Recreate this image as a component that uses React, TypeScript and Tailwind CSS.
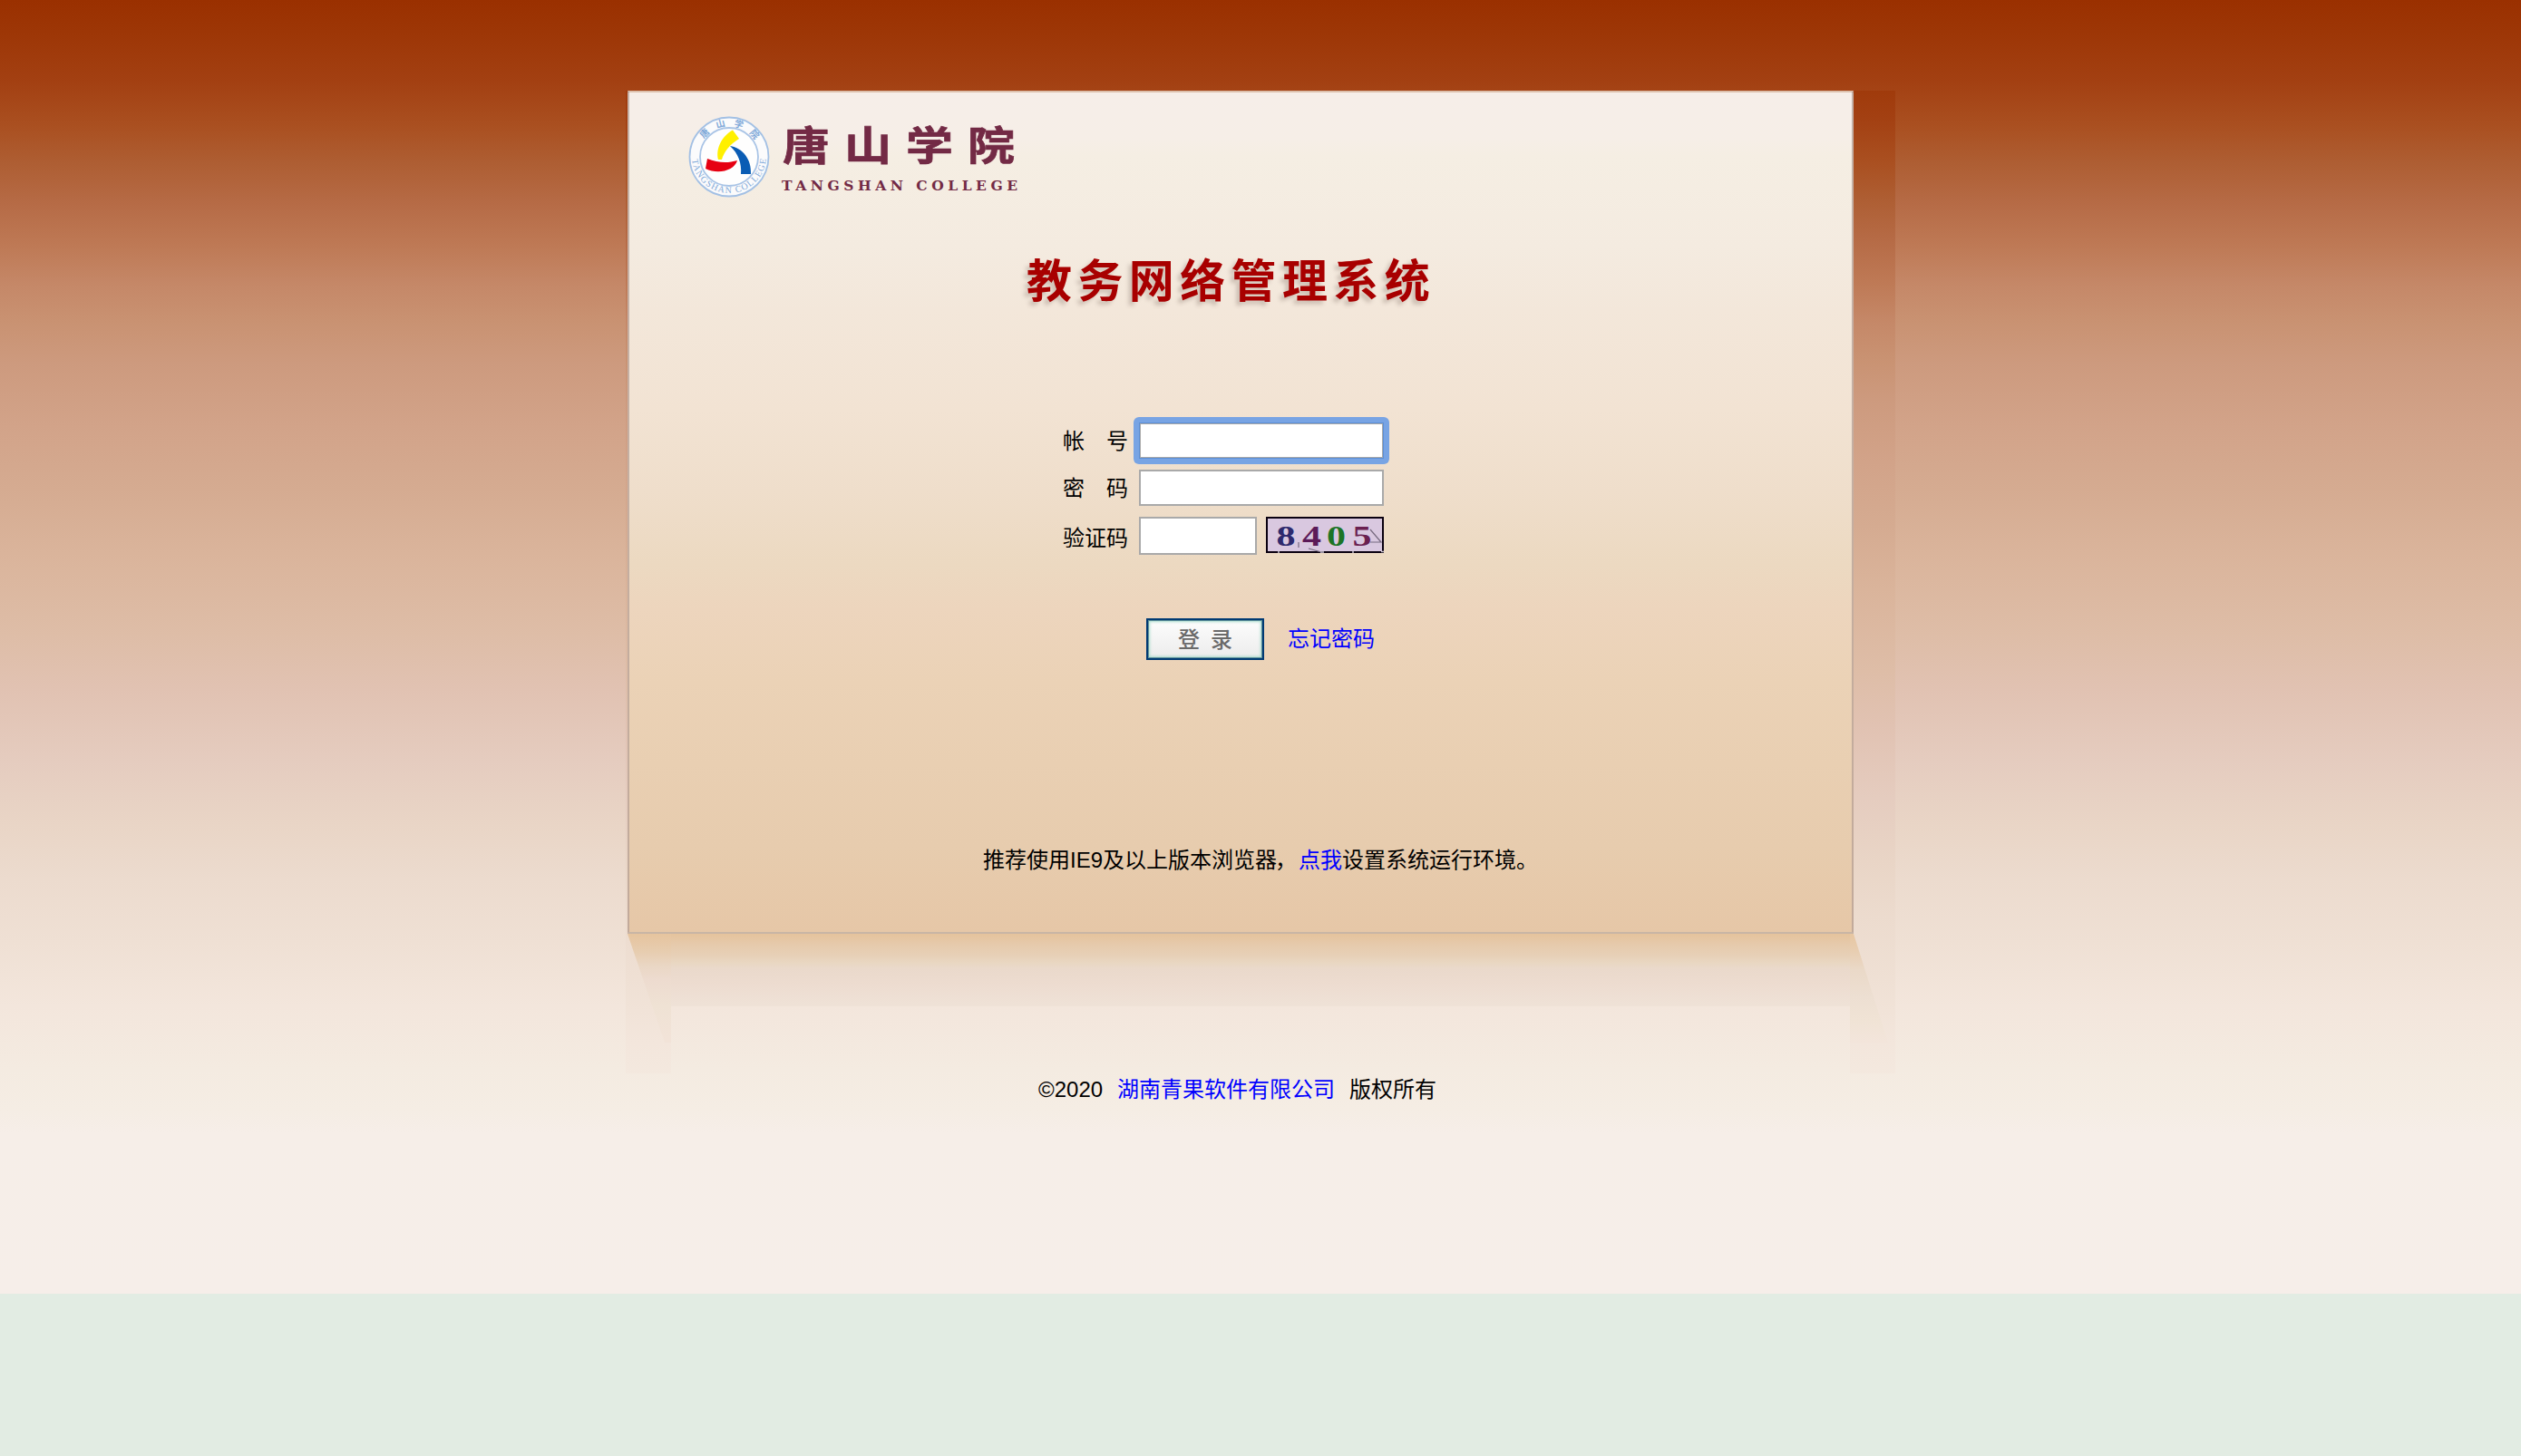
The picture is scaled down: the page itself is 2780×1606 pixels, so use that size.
import React from "react";

const SKY =
  "bg-[linear-gradient(180deg,#9a3000_0px,#9d3606_35px,#a34012_90px,#aa5021_140px,#ae5e33_180px,#b66b46_225px,#be7955_270px,#c58868_315px,#c99272_355px,#cd9a7e_400px,#d2a389_470px,#d5ab91_540px,#dab49b_610px,#debda7_700px,#e1c2b2_760px,#e5ccbf_840px,#e9d5c6_910px,#ecdbce_970px,#efe0d4_1040px,#f3e6dc_1110px,#f4ebe1_1180px,#f5ede4_1225px,#f6eee8_1250px,#f6eee9_1427px)]";

const CJK = "font-['Liberation_Sans','Noto_Sans_CJK_SC',sans-serif]";

function Logo() {
  return (
    <svg width="384" height="96" viewBox="0 0 384 96" className="block">
      <defs>
        <path id="sealTop" d="M12 47 A34 34 0 0 1 80 47" />
        <path id="sealBottom" d="M5 46 A41 41 0 0 0 87 46" />
      </defs>
      <circle cx="46" cy="47" r="43.5" fill="#fbfbfc" stroke="#a3c0e4" strokeWidth="1.8" />
      <circle cx="46" cy="47" r="32" fill="#fefefe" stroke="#a9c4e6" strokeWidth="1.8" />
      <text fontFamily="'Noto Sans CJK SC', sans-serif" fontWeight="700" fontSize="10" fill="#7fa8d8">
        <textPath href="#sealTop" startOffset="21" textLength="66">唐山学院</textPath>
      </text>
      <text fontFamily="'Liberation Serif', serif" fontSize="10" fill="#7fa8d8">
        <textPath href="#sealBottom" startOffset="4" textLength="121">TANGSHAN COLLEGE</textPath>
      </text>
      <path d="M50 17.5 L57 27 C47 33 40 42 38 50 L34 50 C31 38 38 24 50 17.5Z" fill="#fff000" />
      <path d="M47 35 C61 37 71 50 70 66 L59 66 C60 54 56 43 47 35Z" fill="#0a5cb4" />
      <path d="M22 49 C34 54 45 54 55 51 C52 62 34 67 20 60Z" fill="#e60012" />
      <g fill="#732a45" stroke="#732a45">
        <text
          transform="translate(105 50.5) scale(1 0.86)"
          textLength="256"
          fontFamily="'Noto Sans CJK SC', sans-serif"
          fontWeight="700"
          fontSize="52"
          strokeWidth="0.8"
        >
          唐山学院
        </text>
        <text
          x="104"
          y="84"
          textLength="260"
          fontFamily="'DejaVu Serif', 'Liberation Serif', serif"
          fontWeight="700"
          fontSize="15.5"
          strokeWidth="0"
        >
          TANGSHAN COLLEGE
        </text>
      </g>
    </svg>
  );
}

function Captcha() {
  return (
    <svg width="130" height="40" viewBox="0 0 130 40" className="ml-[10px] block">
      <rect x="1" y="1" width="128" height="38" fill="#d9c8e0" stroke="#0a0010" strokeWidth="2" />
      <g fontFamily="'Liberation Serif', serif" fontWeight="700" fontSize="32">
        <text x="11.5" y="32" textLength="21" lengthAdjust="spacingAndGlyphs" fill="#2e2a6e">8</text>
        <text x="40" y="32" textLength="21" lengthAdjust="spacingAndGlyphs" fill="#5c1a58">4</text>
        <text x="67" y="32" textLength="21" lengthAdjust="spacingAndGlyphs" fill="#1c7426">0</text>
        <text x="95.5" y="32" textLength="21" lengthAdjust="spacingAndGlyphs" fill="#6a2050">5</text>
      </g>
      <path d="M36 28v6M47 35l14 4M115 14l12 14h-12" fill="none" stroke="#776a80" strokeWidth="1.2" />
      <path d="M60 39h4M95 39h2M13 39h2M127 38.5h3" stroke="#c9c2cf" strokeWidth="1.5" />
    </svg>
  );
}

function Row({ label, className, children }: { label: React.ReactNode; className: string; children: React.ReactNode }) {
  return (
    <div className={`flex items-center ${className}`}>
      <label className="w-[84px] shrink-0 whitespace-pre pt-[2px] leading-none">{label}</label>
      {children}
    </div>
  );
}

function Panel() {
  return (
    <section className="h-[930px] w-[1352px] border-2 border-x-[#b9a397]/80 border-b-[#c8b5a5] border-t-[#dcc0ad] bg-[linear-gradient(180deg,#f6eee9_0px,#f6eee7_50px,#f5eee3_70px,#f4ebe0_170px,#f3e7da_240px,#f2e3d3_350px,#efdecb_440px,#ecd9c1_520px,#edd5bd_570px,#ebd2b6_650px,#e9cfb2_740px,#e7ccae_830px,#e6c7a7_926px)]">
      <div className="ml-[64px] pt-[24px]">
        <Logo />
      </div>
      <h1 className="ml-[438px] mt-[46px] whitespace-nowrap font-['Noto_Sans_CJK_SC',sans-serif] text-[50px] font-bold leading-[76px] tracking-[6.4px] text-[#a80000] [text-shadow:-4px_4px_4px_rgba(120,100,90,0.3)]">
        教务网络管理系统
      </h1>
      <form className="ml-[478px] mt-[122px]" onSubmit={(e) => e.preventDefault()}>
        <Row label={"帐\u3000号"} className="h-10">
          <span className="-m-[6px] block rounded-[6px] bg-[#78a4e4] p-[6px]">
            <span className="block bg-[#5c8fd6] p-px">
              <input
                aria-label="帐号"
                className="block h-[38px] w-[268px] border border-[#a9a9a9] bg-white outline-none"
              />
            </span>
          </span>
        </Row>
        <Row label={"密\u3000码"} className="mt-3 h-10">
          <input type="password" aria-label="密码" className="h-10 w-[270px] border-2 border-[#a9a9a9] bg-white outline-none" />
        </Row>
        <div className="mt-3 flex h-[42px] items-start">
          <label className="w-[84px] shrink-0 pt-[12px] leading-none">验证码</label>
          <input aria-label="验证码" className="h-[42px] w-[130px] border-2 border-[#a9a9a9] bg-white outline-none" />
          <Captcha />
        </div>
        <div className="ml-[92px] mt-[70px] flex h-[46px] items-center">
          <button className="h-[46px] w-[130px] border-2 border-[#003a73] bg-[linear-gradient(180deg,#fdfdfd,#f5f5f5_45%,#ececec)] pb-[2px] font-['Noto_Sans_CJK_SC',sans-serif] text-[24px] font-medium leading-none text-[#6a6a6a] shadow-[inset_0_0_0_1px_#5d8f99,inset_0_0_3px_2px_#a9dccb]">
            <span className="mr-[12px]">登</span>录
          </button>
          <a className="ml-[26px] leading-none text-[#0000ff]">忘记密码</a>
        </div>
      </form>
      <p className="ml-[390px] mt-[206px] whitespace-nowrap leading-[30px]">
        推荐使用IE9及以上版本浏览器<span className="relative -left-0.5">，</span>
        <a className="text-[#0000ff]">点我</a>设置系统运行环境。
      </p>
    </section>
  );
}

function Reflection() {
  return (
    <div className="flex h-[154px] w-[1400px]">
      <div className="h-[154px] w-[50px]">
        <div className="h-[120px] bg-[linear-gradient(180deg,#e6c49e_0px,#e7cdb0_20px,#ead7c5_36px,#eddbcf_50px,#efe2d4_80px,#f2e3d8_115px)] [clip-path:polygon(2px_0,100%_0,100%_100%,43px_100%)]" />
      </div>
      <div className="h-[80px] w-[1300px] bg-[linear-gradient(180deg,#e5c39c_0px,#e6caac_12px,#e7d0b7_24px,#e9d7c2_32px,#ead9cb_38px,#eddcd0_56px,#efe2d7_80px)]" />
      <div className="h-[154px] w-[50px]">
        <div className="h-[120px] bg-[linear-gradient(180deg,#e7c6a1_0px,#e8ceb2_20px,#ead9c8_40px,#eddfd2_70px,#f0e3d5_95px,#f3e5db_120px)] [clip-path:polygon(0_0,4px_0,42px_100%,0_100%)]" />
      </div>
    </div>
  );
}

export default function App() {
  return (
    <main className={`h-[1606px] w-[2780px] overflow-hidden bg-[#e2ece3] text-[24px] text-black ${CJK}`}>
      <div className={`h-[1427px] pl-[690px] pt-[100px] ${SKY}`}>
        <div className="grid h-[1084px] w-[1400px] grid-cols-[50px_1300px_50px]">
          <div className={`col-start-1 row-start-1 bg-[position:0_-60px] bg-no-repeat [background-size:100%_1427px] ${SKY}`} />
          <div className={`col-start-3 row-start-1 bg-[position:0_-60px] bg-no-repeat [background-size:100%_1427px] ${SKY}`} />
          <div className="col-span-3 col-start-1 row-start-1">
            <div className="pl-[2px]">
              <Panel />
            </div>
            <Reflection />
          </div>
        </div>
        <footer className="ml-[455px] flex whitespace-nowrap pt-[3px] leading-[30px]">
          <span>©2020</span>
          <a className="ml-[16px] text-[#0000ff]">湖南青果软件有限公司</a>
          <span className="ml-[16px]">版权所有</span>
        </footer>
      </div>
    </main>
  );
}
